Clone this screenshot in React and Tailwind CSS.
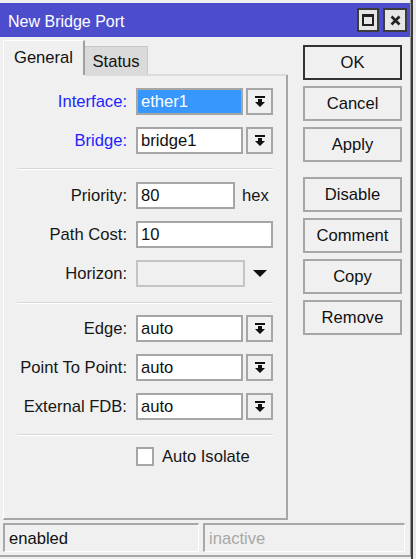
import React from 'react'

const font = "font-['Liberation_Sans',Arial,sans-serif]"

function DropIcon() {
  return (
    <svg width="10" height="11" viewBox="0 0 10 11">
      <rect x="0" y="0" width="10" height="2" fill="#111" />
      <path d="M3 3h4v3h3l-5 5l-5-5h3z" fill="#111" />
    </svg>
  )
}

function Label({ children, blue }) {
  return (
    <div className={`w-[123px] pt-[2px] text-right text-[16.6px] leading-none ${blue ? 'text-[#1f1fff]' : 'text-[#161616]'}`}>
      {children}
    </div>
  )
}

function ComboRow({ label, value, blue, selected }) {
  return (
    <div className="flex items-center h-[27px]">
      <Label blue={blue}>{label}</Label>
      <div
        className={`ml-[9px] w-[107px] h-[27px] border-2 border-[#a6a6a6] flex items-center pl-[3px] pt-[1px] text-[16.6px] ${
          selected ? 'bg-[#3797fd] text-white' : 'bg-white text-[#111]'
        }`}
      >
        {value}
      </div>
      <div className="ml-[3px] w-[27px] h-[27px] border-2 border-[#a6a6a6] bg-[#f0f0f0] flex items-center justify-center">
        <DropIcon />
      </div>
    </div>
  )
}

function Separator() {
  return <div className="mx-[13px] h-[2px] border-t border-[#d6d6d6] border-b border-b-white" />
}

function Btn({ children, primary }) {
  return (
    <div
      className={`w-[99px] h-[35px] border-2 bg-[#f0f0f0] flex items-center justify-center pt-[1px] text-[16.6px] text-[#111] ${
        primary ? 'border-[#333]' : 'border-[#a6a6a6]'
      }`}
    >
      {children}
    </div>
  )
}

export default function App() {
  return (
    <div className={`w-[416px] h-[559px] bg-[#f0f0f0] flex ${font}`}>
      <div className="w-[411px] h-[557px] flex flex-col pt-[3px] bg-[#f0f0f0] border-r border-[#9a9a9a] border-b-2 border-b-[#a6a6a6]">
        {/* title bar */}
        <div className="h-[34px] bg-[#4c4dcc] flex items-center pl-[8px] pr-[3px]">
          <span className="text-white text-[16px] leading-none pt-[3px]">New Bridge Port</span>
          <div className="ml-auto flex gap-[4px]">
            <div className="w-[22px] h-[24px] border-2 border-[#3c3c3c] bg-[#e6e6e6] flex items-center justify-center">
              <div className="w-[12px] h-[12px] border-2 border-t-[3px] border-[#222]" />
            </div>
            <div className="w-[24px] h-[24px] border-2 border-[#3c3c3c] bg-[#e6e6e6] flex items-center justify-center">
              <svg width="11" height="11" viewBox="0 0 11 11">
                <path d="M1.5 1.5l8 8M9.5 1.5l-8 8" stroke="#222" strokeWidth="2.6" />
              </svg>
            </div>
          </div>
        </div>

        <div className="flex px-[3px]">
          {/* left: tabs + panel */}
          <div className="w-[285px] flex flex-col">
            <div className="h-[38px] flex items-end">
              <div className="w-[82px] h-[35px] border-l border-t border-white border-r-2 border-r-[#a0a0a0] flex items-center justify-center text-[16.6px] text-[#111]">
                General
              </div>
              <div className="w-[63px] h-[29px] bg-[#dadada] border-t border-r border-[#c8c8c8] flex items-center justify-center pt-[2px] text-[16.6px] text-[#111]">
                Status
              </div>
              <div className="flex-1 border-b border-[#dcdcdc]" />
            </div>
            <div className="h-[445px] border-l border-white border-r-2 border-r-[#a6a6a6] border-b-2 border-b-[#a6a6a6] flex flex-col pt-[13px] relative">
              <div className="absolute left-[82px] right-0 top-0 h-px bg-[#dcdcdc]" />
              <div className="flex flex-col gap-[12px]">
                <ComboRow label="Interface:" value="ether1" blue selected />
                <ComboRow label="Bridge:" value="bridge1" blue />
              </div>
              <div className="mt-[14px] mb-[12px]">
                <Separator />
              </div>
              <div className="flex flex-col gap-[12px]">
                <div className="flex items-center h-[27px]">
                  <Label>Priority:</Label>
                  <div className="ml-[9px] w-[99px] h-[27px] border-2 border-[#a6a6a6] bg-white flex items-center pl-[3px] pt-[1px] text-[16.6px] text-[#111]">
                    80
                  </div>
                  <span className="ml-[7px] pt-[2px] text-[16.6px] text-[#161616]">hex</span>
                </div>
                <div className="flex items-center h-[27px]">
                  <Label>Path Cost:</Label>
                  <div className="ml-[9px] w-[137px] h-[27px] border-2 border-[#a6a6a6] bg-white flex items-center pl-[3px] pt-[1px] text-[16.6px] text-[#111]">
                    10
                  </div>
                </div>
                <div className="flex items-center h-[27px]">
                  <Label>Horizon:</Label>
                  <div className="ml-[9px] w-[109px] h-[27px] border-2 border-[#c4c4c4] bg-[#f0f0f0]" />
                  <svg className="ml-[8px]" width="14" height="7" viewBox="0 0 14 7">
                    <path d="M0 0h14l-7 7z" fill="#111" />
                  </svg>
                </div>
              </div>
              <div className="mt-[15px] mb-[11px]">
                <Separator />
              </div>
              <div className="flex flex-col gap-[12px]">
                <ComboRow label="Edge:" value="auto" />
                <ComboRow label="Point To Point:" value="auto" />
                <ComboRow label="External FDB:" value="auto" />
              </div>
              <div className="mt-[14px] mb-[11px]">
                <Separator />
              </div>
              <div className="flex items-center h-[19px] pl-[132px]">
                <div className="w-[18px] h-[19px] border-2 border-[#a6a6a6] bg-white" />
                <span className="ml-[8px] pt-[2px] text-[16.6px] text-[#161616]">Auto Isolate</span>
              </div>
            </div>
          </div>

          {/* right: buttons */}
          <div className="ml-[15px] pt-[8px] flex flex-col">
            <div className="flex flex-col gap-[6px]">
              <Btn primary>OK</Btn>
              <Btn>Cancel</Btn>
              <Btn>Apply</Btn>
            </div>
            <div className="mt-[15px] flex flex-col gap-[6px]">
              <Btn>Disable</Btn>
              <Btn>Comment</Btn>
              <Btn>Copy</Btn>
              <Btn>Remove</Btn>
            </div>
          </div>
        </div>

        {/* status bar */}
        <div className="mt-[3px] px-[3px] flex gap-[4px]">
          <div className="w-[196px] h-[29px] border-l-2 border-t-2 border-[#a8a8a8] border-r border-b border-r-white border-b-white flex items-center pl-[4px] pt-[2px] text-[16.6px] text-[#111]">
            enabled
          </div>
          <div className="w-[202px] h-[29px] border-l-2 border-t-2 border-[#a8a8a8] border-r border-b border-r-white border-b-white flex items-center pl-[4px] pt-[2px] text-[16.6px] text-[#a8a8a8]">
            inactive
          </div>
        </div>
      </div>
      <div className="flex-1 flex">
        <div className="w-[2px] bg-[#3a3a3a]" />
        <div className="flex-1 bg-[#e8e8e8]" />
      </div>
    </div>
  )
}
